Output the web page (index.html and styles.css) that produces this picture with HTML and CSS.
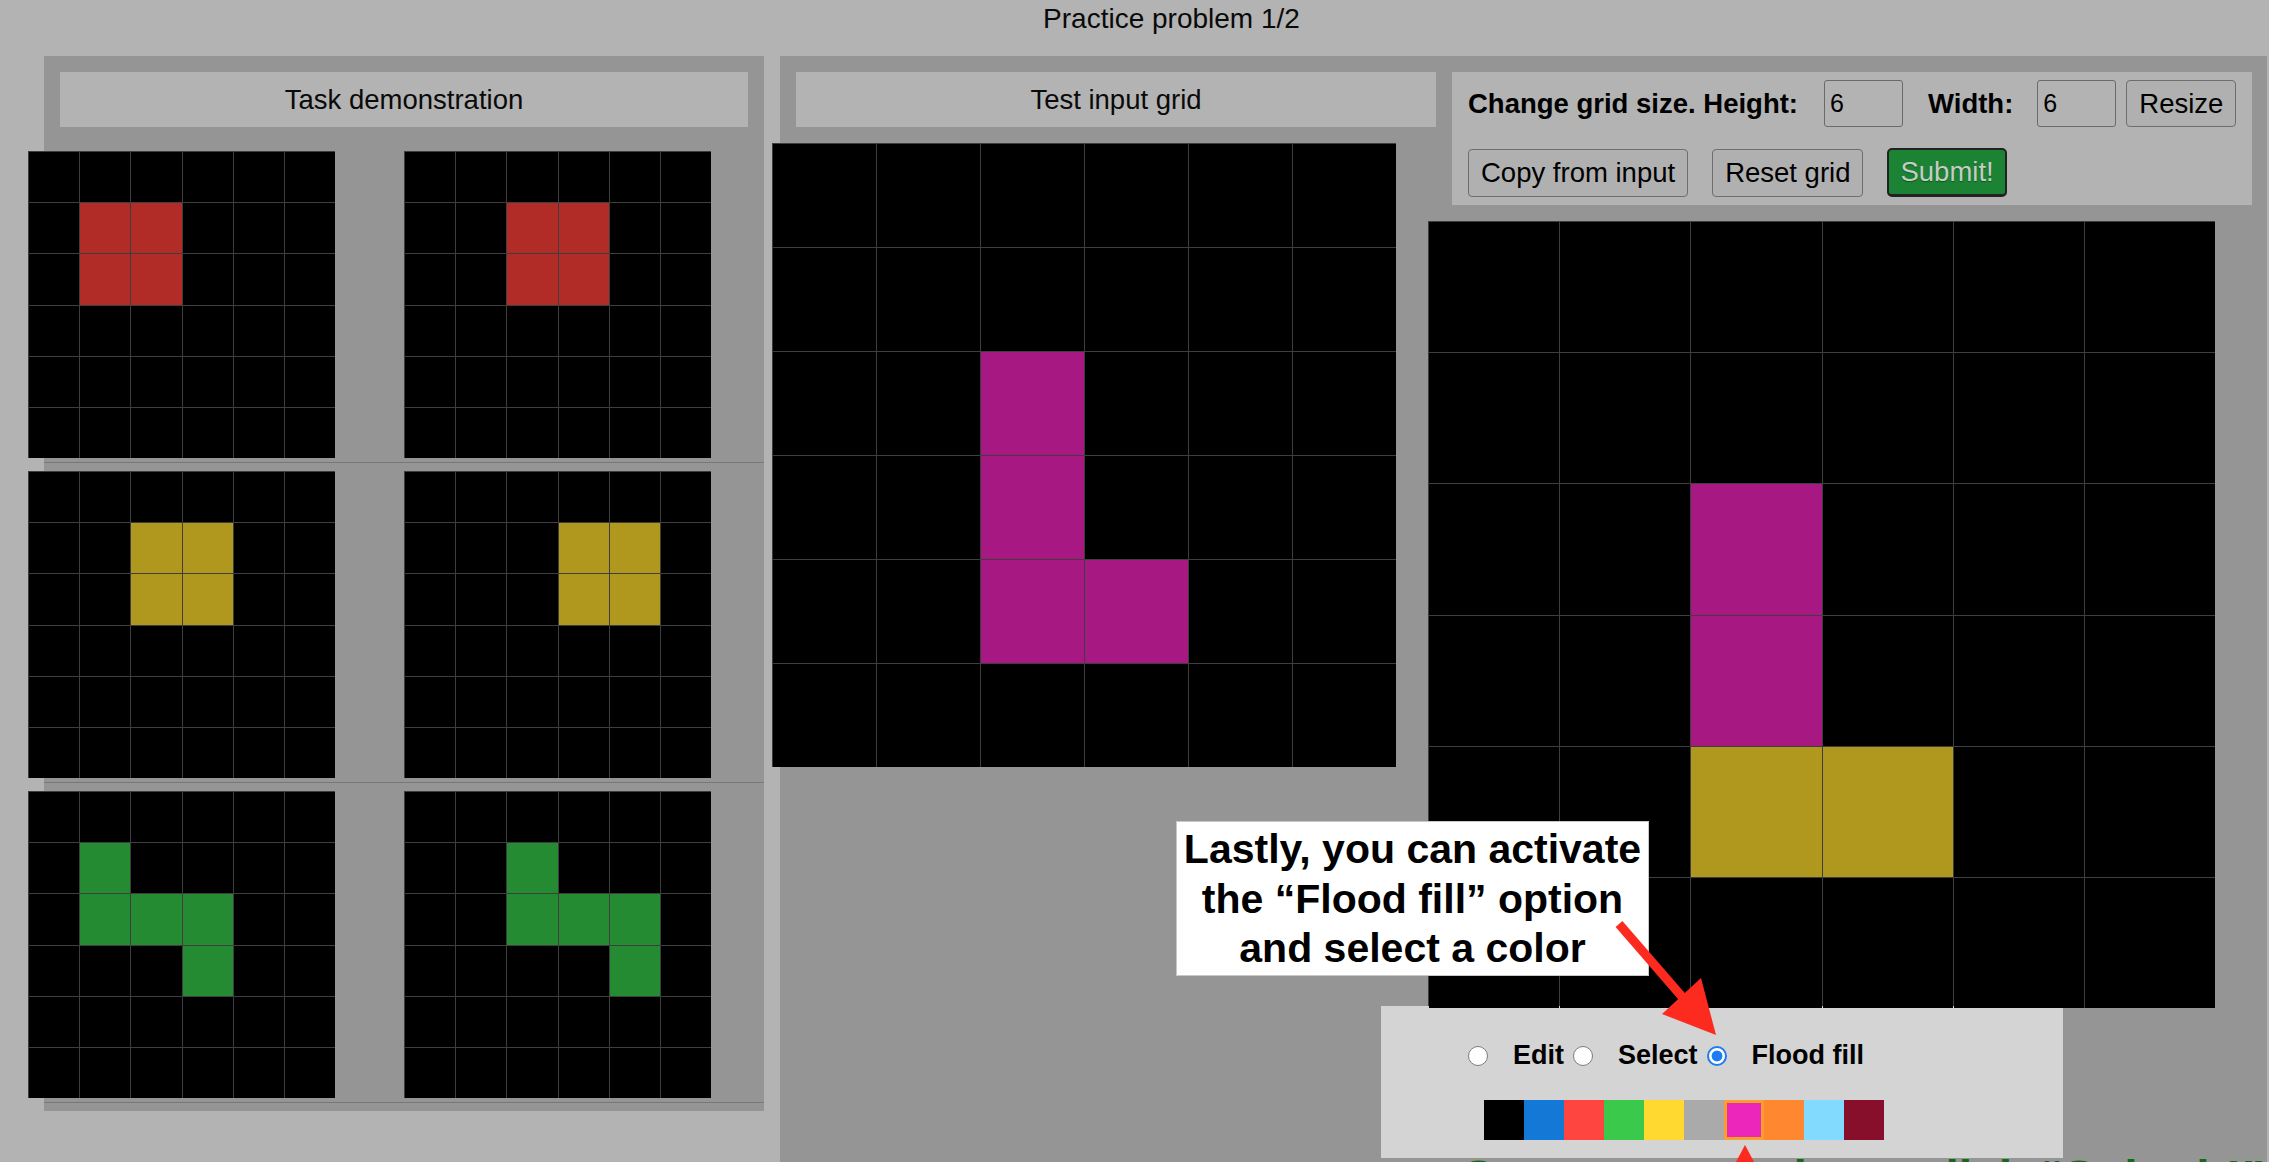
FILE: index.html
```html
<!DOCTYPE html>
<html>
<head>
<meta charset="utf-8">
<title>Practice problem 1/2</title>
<link rel="stylesheet" href="styles.css">
</head>
<body>
<div class="page">
  <div class="title">Practice problem 1/2</div>
  <div class="main">
    <section class="panel demo">
      <div class="header">Task demonstration</div>
      <div class="pair">
        <div class="grid small">
          <i></i><i></i><i></i><i></i><i></i><i></i>
          <i></i><i class="r"></i><i class="r"></i><i></i><i></i><i></i>
          <i></i><i class="r"></i><i class="r"></i><i></i><i></i><i></i>
          <i></i><i></i><i></i><i></i><i></i><i></i>
          <i></i><i></i><i></i><i></i><i></i><i></i>
          <i></i><i></i><i></i><i></i><i></i><i></i>
        </div>
        <div class="grid small">
          <i></i><i></i><i></i><i></i><i></i><i></i>
          <i></i><i></i><i class="r"></i><i class="r"></i><i></i><i></i>
          <i></i><i></i><i class="r"></i><i class="r"></i><i></i><i></i>
          <i></i><i></i><i></i><i></i><i></i><i></i>
          <i></i><i></i><i></i><i></i><i></i><i></i>
          <i></i><i></i><i></i><i></i><i></i><i></i>
        </div>
      </div>
      <div class="pair">
        <div class="grid small">
          <i></i><i></i><i></i><i></i><i></i><i></i>
          <i></i><i></i><i class="y"></i><i class="y"></i><i></i><i></i>
          <i></i><i></i><i class="y"></i><i class="y"></i><i></i><i></i>
          <i></i><i></i><i></i><i></i><i></i><i></i>
          <i></i><i></i><i></i><i></i><i></i><i></i>
          <i></i><i></i><i></i><i></i><i></i><i></i>
        </div>
        <div class="grid small">
          <i></i><i></i><i></i><i></i><i></i><i></i>
          <i></i><i></i><i></i><i class="y"></i><i class="y"></i><i></i>
          <i></i><i></i><i></i><i class="y"></i><i class="y"></i><i></i>
          <i></i><i></i><i></i><i></i><i></i><i></i>
          <i></i><i></i><i></i><i></i><i></i><i></i>
          <i></i><i></i><i></i><i></i><i></i><i></i>
        </div>
      </div>
      <div class="pair">
        <div class="grid small">
          <i></i><i></i><i></i><i></i><i></i><i></i>
          <i></i><i class="g"></i><i></i><i></i><i></i><i></i>
          <i></i><i class="g"></i><i class="g"></i><i class="g"></i><i></i><i></i>
          <i></i><i></i><i></i><i class="g"></i><i></i><i></i>
          <i></i><i></i><i></i><i></i><i></i><i></i>
          <i></i><i></i><i></i><i></i><i></i><i></i>
        </div>
        <div class="grid small">
          <i></i><i></i><i></i><i></i><i></i><i></i>
          <i></i><i></i><i class="g"></i><i></i><i></i><i></i>
          <i></i><i></i><i class="g"></i><i class="g"></i><i class="g"></i><i></i>
          <i></i><i></i><i></i><i></i><i class="g"></i><i></i>
          <i></i><i></i><i></i><i></i><i></i><i></i>
          <i></i><i></i><i></i><i></i><i></i><i></i>
        </div>
      </div>
    </section>

    <section class="panel work">
      <div class="input-col">
        <div class="header">Test input grid</div>
        <div class="grid big">
          <i></i><i></i><i></i><i></i><i></i><i></i>
          <i></i><i></i><i></i><i></i><i></i><i></i>
          <i></i><i></i><i class="m"></i><i></i><i></i><i></i>
          <i></i><i></i><i class="m"></i><i></i><i></i><i></i>
          <i></i><i></i><i class="m"></i><i class="m"></i><i></i><i></i>
          <i></i><i></i><i></i><i></i><i></i><i></i>
        </div>
      </div>

      <div class="output-col">
        <div class="toolbar">
          <div class="trow trow1">
            <span class="lbl lbl-height">Change grid size. Height:</span>
            <input class="num num-h" type="text" value="6">
            <span class="lbl lbl-width">Width:</span>
            <input class="num num-w" type="text" value="6">
            <button class="btn">Resize</button>
          </div>
          <div class="trow trow2">
            <button class="btn btn-tall">Copy from input</button>
            <button class="btn btn-tall">Reset grid</button>
            <button class="btn btn-submit">Submit!</button>
          </div>
        </div>

        <div class="grid out">
          <i></i><i></i><i></i><i></i><i></i><i></i>
          <i></i><i></i><i></i><i></i><i></i><i></i>
          <i></i><i></i><i class="m"></i><i></i><i></i><i></i>
          <i></i><i></i><i class="m"></i><i></i><i></i><i></i>
          <i></i><i></i><i class="y"></i><i class="y"></i><i></i><i></i>
          <i></i><i></i><i></i><i></i><i></i><i></i>
        </div>

        <div class="tools">
          <div class="modes">
            <input class="radio" type="radio" name="mode"><label class="mode-lbl">Edit</label>
            <input class="radio" type="radio" name="mode"><label class="mode-lbl">Select</label>
            <input class="radio" type="radio" name="mode" checked><label class="mode-lbl">Flood fill</label>
          </div>
          <div class="palette">
            <span class="sw c0"></span>
            <span class="sw c1"></span>
            <span class="sw c2"></span>
            <span class="sw c3"></span>
            <span class="sw c4"></span>
            <span class="sw c5"></span>
            <span class="sw c6 selected"></span>
            <span class="sw c7"></span>
            <span class="sw c8"></span>
            <span class="sw c9"></span>
          </div>
        </div>

        <div class="message">Once you are done, click “Submit!” to check your answer</div>
      </div>
    </section>
  </div>

  <div class="callout">Lastly, you can activate<br>the “Flood fill” option<br>and select a color</div>

  <svg class="arrows" width="2269" height="1162" viewBox="0 0 2269 1162">
    <line x1="1619" y1="924" x2="1684" y2="999" stroke="#fd2a1f" stroke-width="9"/>
    <polygon points="1716,1035 1662,1014 1701,978" fill="#fd2a1f"/>
    <polygon points="1745,1145 1721,1190 1769,1190" fill="#fd2a1f"/>
  </svg>
</div>
</body>
</html>
```

FILE: styles.css
```css
* {
  box-sizing: border-box;
}

html,
body {
  margin: 0;
  padding: 0;
}

body {
  background: #b3b3b3;
  font-family: "Liberation Sans", Arial, Helvetica, sans-serif;
  color: #000;
  overflow: hidden;
}

.page {
  position: relative;
  width: 2269px;
  height: 1162px;
  overflow: hidden;
}

.title {
  height: 56px;
  padding: 3px 0 0 74px;
  text-align: center;
  font-size: 28px;
  line-height: 32px;
  color: #0a0a0a;
}

.main {
  display: flex;
  align-items: flex-start;
  gap: 16px;
  padding-left: 44px;
}

.panel {
  background: #959595;
}

.demo {
  width: 720px;
  padding: 16px 16px 8px;
}

.header {
  height: 55px;
  line-height: 55px;
  background: #b3b3b3;
  text-align: center;
  font-size: 27.5px;
  color: #0a0a0a;
}

.pair {
  display: flex;
  gap: 69px;
  margin: 16px -16px 0;
  padding: 8px 0 4px;
  border-bottom: 1px solid #787878;
}

.pair + .pair {
  margin-top: 0;
}

.pair .grid:first-child {
  margin-left: -16px;
}

/* grids */
.grid {
  display: grid;
  grid-template-columns: repeat(6, 1fr);
  grid-template-rows: repeat(6, 1fr);
  gap: 1px;
  padding: 1px 0 0 1px;
  background: #3e3e3e;
  flex: none;
}

.grid i {
  display: block;
  background: #000;
}

.grid i.r { background: #b22c27; }
.grid i.y { background: #b0981f; }
.grid i.g { background: #248b32; }
.grid i.m { background: #a71882; }

.small {
  width: 307px;
  height: 307px;
}

.work {
  width: 1487px;
  min-height: 1200px;
  padding: 16px 15px 0 16px;
  display: flex;
  gap: 16px;
}

.input-col {
  width: 640px;
  flex: none;
}

.big {
  width: 624px;
  height: 624px;
  margin: 16px 0 0 -24px;
}

.output-col {
  width: 800px;
  flex: none;
}

/* toolbar */
.toolbar {
  height: 133px;
  background: #b3b3b3;
  padding: 8px 16px;
}

.trow {
  display: flex;
  align-items: center;
}

.trow1 {
  height: 47px;
}

.trow2 {
  height: 49px;
  margin-top: 21px;
  gap: 24px;
}

.lbl {
  font-weight: bold;
  font-size: 27.5px;
  white-space: nowrap;
}

.lbl-height {
  margin-right: 26px;
}

.lbl-width {
  margin-right: 24px;
}

.num {
  width: 79px;
  height: 47px;
  border: 1px solid #6a6a6a;
  border-radius: 3px;
  background: transparent;
  font-family: "Liberation Sans", Arial, sans-serif;
  font-size: 25px;
  padding: 0 0 0 5px;
  color: #000;
  outline: none;
}

.num-h {
  margin-right: 25px;
}

.num-w {
  margin-right: 10px;
}

.btn {
  height: 47px;
  padding: 0 12px;
  border: 1px solid #6e6e6e;
  border-radius: 4px;
  background: #b0b0b0;
  font-family: "Liberation Sans", Arial, sans-serif;
  font-size: 27.5px;
  color: #000;
  white-space: nowrap;
}

.btn-tall {
  height: 48px;
}

.btn-submit {
  height: 49px;
  padding: 0 11px;
  background: #1b8333;
  border: 2px solid #222;
  border-bottom-width: 3px;
  border-radius: 5px;
  color: #c4cdc4;
  text-shadow: 0 1px 1px rgba(0, 0, 0, 0.35);
}

.out {
  width: 787px;
  height: 787px;
  margin: 16px 0 0 -24px;
}

/* highlighted edit tools */
.tools {
  width: 682px;
  height: 152px;
  margin: -2px 0 0 -71px;
  background: #d4d4d4;
  padding: 36px 0 0 87px;
}

.modes {
  display: flex;
  align-items: center;
  height: 27px;
}

.radio {
  appearance: none;
  -webkit-appearance: none;
  width: 20px;
  height: 20px;
  margin: 0 25px 0 0;
  border-radius: 50%;
  border: 1px solid #7d7d7d;
  background: #fff;
  flex: none;
}

.radio:checked {
  border: 2px solid #1d7bf3;
  background: radial-gradient(circle, #1d7bf3 0 5px, #fff 5.8px);
}

.mode-lbl {
  font-weight: bold;
  font-size: 27px;
  line-height: 27px;
  margin-right: 9px;
  white-space: nowrap;
}

.palette {
  display: flex;
  margin: 31px 0 0 16px;
}

.sw {
  display: block;
  width: 40px;
  height: 40px;
}

.sw.c0 { background: #000000; }
.sw.c1 { background: #1478d6; }
.sw.c2 { background: #ff4540; }
.sw.c3 { background: #3ac94b; }
.sw.c4 { background: #ffd92f; }
.sw.c5 { background: #aaaaaa; }
.sw.c6 { background: #ec25bb; }
.sw.c7 { background: #ff8730; }
.sw.c8 { background: #83daff; }
.sw.c9 { background: #880f2b; }

.sw.selected {
  box-shadow: inset 0 0 0 3px #f8a027;
}

.message {
  margin: -4px 0 0 8px;
  font-weight: bold;
  font-size: 48px;
  line-height: 48px;
  color: #17661b;
  white-space: nowrap;
}

/* tutorial overlay */
.callout {
  position: absolute;
  left: 1176px;
  top: 821px;
  width: 473px;
  height: 155px;
  background: #fff;
  border: 1px solid #c8c8c8;
  padding: 3px 0 0;
  text-align: center;
  font-weight: bold;
  font-size: 41px;
  line-height: 49.5px;
  color: #000;
  white-space: nowrap;
}

.arrows {
  position: absolute;
  left: 0;
  top: 0;
  pointer-events: none;
}
```
